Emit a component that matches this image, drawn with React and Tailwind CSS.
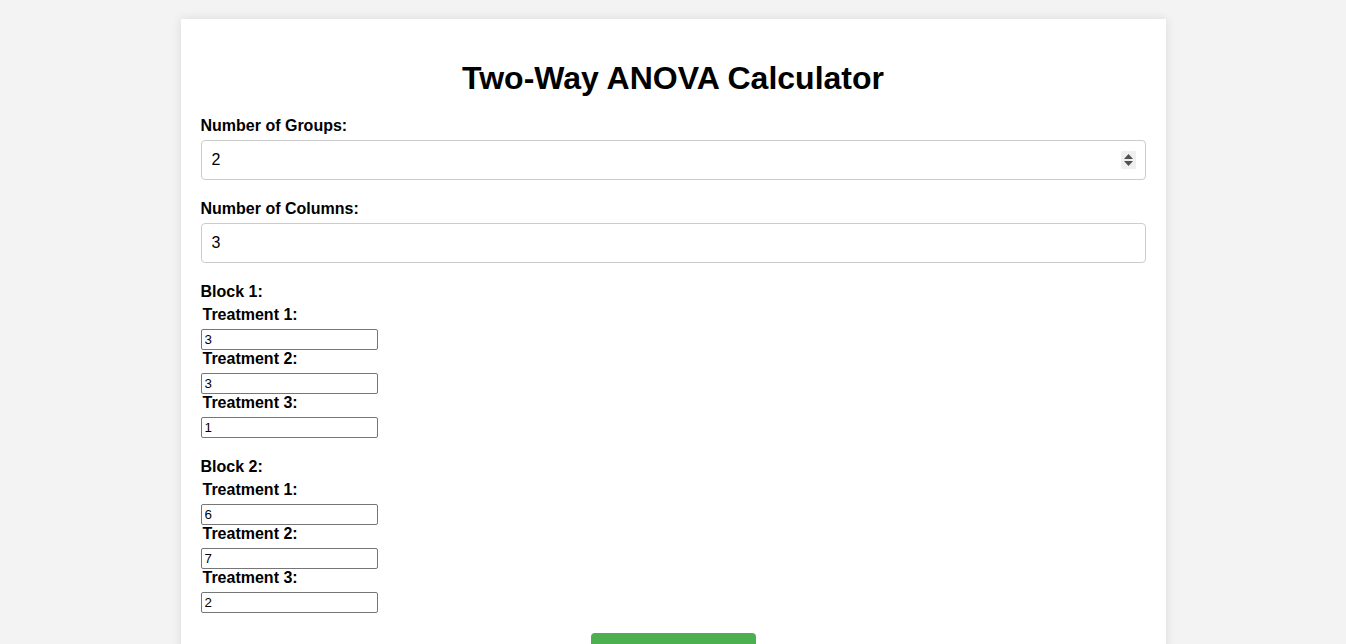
import React from "react";

function SmallInput({ value }) {
  return (
    <input
      type="text"
      defaultValue={value}
      className="block w-[177px] h-[21px] border border-[#767676] rounded-[2px] px-[3px] text-[13.33px] text-black bg-white outline-none"
      style={{ fontFamily: '"Liberation Sans", Arial, sans-serif' }}
    />
  );
}

function Block({ n, values }) {
  return (
    <div className="mb-5">
      <label className="block mb-[5px] font-bold text-base leading-[18px]">Block {n}:</label>
      {values.map((v, i) => (
        <div key={i}>
          <label className="block mb-[5px] ml-[2px] font-bold text-base leading-[18px]">
            Treatment {i + 1}:
          </label>
          <SmallInput value={v} />
        </div>
      ))}
    </div>
  );
}

export default function App() {
  return (
    <div
      className="min-h-screen bg-[#f3f3f3] pt-[19px] text-black"
      style={{ fontFamily: '"Liberation Sans", Arial, sans-serif' }}
    >
      <div className="w-[985px] mx-auto bg-white p-5 shadow-[0_0_10px_rgba(0,0,0,0.1)]">
        <h1 className="text-[32px] font-bold text-center leading-[37px] mt-[21px] mb-5">
          Two-Way ANOVA Calculator
        </h1>

        <label className="block mb-[5px] font-bold text-base leading-[18px]">Number of Groups:</label>
        <div className="relative mb-5">
          <input
            type="text"
            defaultValue="2"
            className="block w-full h-10 border border-[#ccc] rounded-[4px] px-[10px] text-base bg-white outline-none"
          />
          <div className="absolute right-[10px] top-[11px] w-[15px] h-[18px] bg-[#efefef] flex flex-col items-center justify-center gap-[2px]">
            <svg width="9" height="5" viewBox="0 0 9 5"><path d="M4.5 0 L9 5 L0 5 Z" fill="#505050" /></svg>
            <svg width="9" height="5" viewBox="0 0 9 5"><path d="M0 0 L9 0 L4.5 5 Z" fill="#505050" /></svg>
          </div>
        </div>

        <label className="block mb-[5px] font-bold text-base leading-[18px]">Number of Columns:</label>
        <input
          type="text"
          defaultValue="3"
          className="block w-full h-10 mb-5 border border-[#ccc] rounded-[4px] px-[10px] text-base bg-white outline-none"
        />

        <Block n={1} values={["3", "3", "1"]} />
        <Block n={2} values={["6", "7", "2"]} />

        <div className="flex justify-center">
          <button className="w-[165px] h-10 bg-[#4CAF50] text-white rounded-[4px] text-base">
            Calculate
          </button>
        </div>
      </div>
    </div>
  );
}
